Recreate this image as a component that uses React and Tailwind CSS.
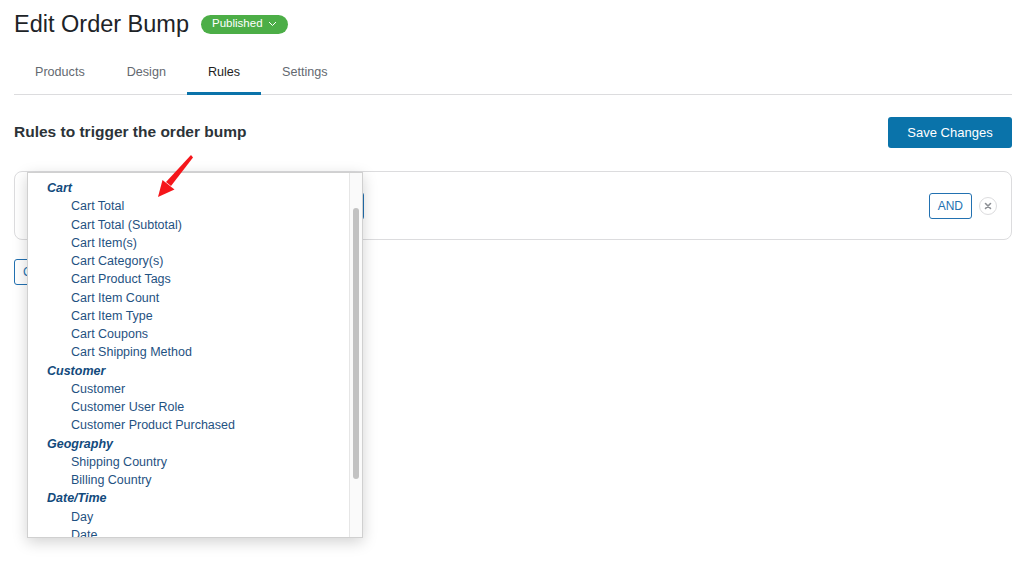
import React from "react";

const groups = [
  {
    label: "Cart",
    items: [
      "Cart Total",
      "Cart Total (Subtotal)",
      "Cart Item(s)",
      "Cart Category(s)",
      "Cart Product Tags",
      "Cart Item Count",
      "Cart Item Type",
      "Cart Coupons",
      "Cart Shipping Method",
    ],
  },
  {
    label: "Customer",
    items: ["Customer", "Customer User Role", "Customer Product Purchased"],
  },
  { label: "Geography", items: ["Shipping Country", "Billing Country"] },
  { label: "Date/Time", items: ["Day", "Date"] },
];

const tabs = ["Products", "Design", "Rules", "Settings"];

const RuleDropdown = () => {
  return (
    <div className="absolute left-[27px] top-[172px] w-[336px] h-[366px] bg-white border border-[#d0d0d0] shadow-[0_4px_14px_rgba(0,0,0,0.18)] overflow-hidden flex">
      <ul className="flex-1 pt-[6px] text-[12.5px] leading-[18.25px]">
        {groups.map((g) => (
          <React.Fragment key={g.label}>
            <li className="pl-[19px] font-bold italic text-[#124a7c]">
              {g.label}
            </li>
            {g.items.map((item) => (
              <li key={item} className="pl-[43px] text-[#1f5282]">
                {item}
              </li>
            ))}
          </React.Fragment>
        ))}
      </ul>
      {/* scrollbar */}
      <div className="w-[13px] border-l border-[#e6e6e6] bg-[#fafafa] relative">
        <div className="absolute left-[3px] top-[35px] w-[6px] h-[271px] rounded-full bg-[#c2c2c2]"></div>
      </div>
    </div>
  );
};

const RedArrow = () => (
  <svg
    className="absolute left-[150px] top-[150px]"
    width="48"
    height="52"
    viewBox="0 0 48 52"
  >
    <polygon points="41,5 43,7.5 21,36 16,32" fill="#f5161b" />
    <polygon points="8,47 12.5,30 24.5,39.5" fill="#f5161b" />
  </svg>
);

export default function App() {
  return (
    <div
      className="relative min-h-[566px] bg-white pl-[14px] pr-[12px] text-[#1e1e1e]"
      style={{ fontFamily: '"Liberation Sans", Arial, sans-serif' }}
    >
      {/* header */}
      <div className="flex items-center gap-[12px] pt-[10px]">
        <h1 className="text-[23.5px] leading-[28px] text-[#1d2327]">
          Edit Order Bump
        </h1>
        <button className="flex items-center gap-[5px] h-[19px] px-[11px] rounded-full bg-[#4cae47] text-white text-[11.5px]">
          Published
          <svg width="9" height="6" viewBox="0 0 9 6" fill="none">
            <path d="M1 1l3.5 3.5L8 1" stroke="white" strokeWidth="1" />
          </svg>
        </button>
      </div>

      {/* tabs */}
      <nav className="flex mt-[12px] border-b border-[#dcdcde]">
        {tabs.map((t) => (
          <div
            key={t}
            className={
              t === "Rules"
                ? "h-[45px] px-[21px] flex items-center text-[12.6px] text-[#1e1e1e] border-b-[3px] border-[#0a73aa] -mb-px pt-[2px]"
                : "h-[45px] px-[21px] flex items-center text-[12.6px] text-[#646970] border-b-[3px] border-transparent -mb-px pt-[2px]"
            }
          >
            {t}
          </div>
        ))}
      </nav>

      {/* rules header */}
      <div className="flex items-center justify-between mt-[22px]">
        <h2 className="text-[15.5px] font-bold text-[#2c3338] -mt-[2px]">
          Rules to trigger the order bump
        </h2>
        <button className="h-[31px] w-[124px] rounded-[3px] bg-[#0a73aa] text-white text-[13px]">
          Save Changes
        </button>
      </div>

      {/* rule card */}
      <div className="mt-[23px] h-[69px] rounded-[8px] border border-[#dcdcde] pl-[12px] pr-[14px] flex items-center justify-between">
        <div className="w-[337px] h-[28px] rounded-[3px] border border-[#2271b1]"></div>
        <div className="flex items-center gap-[7px]">
          <button className="h-[26px] px-[8px] rounded-[3px] border border-[#2271b1] text-[#2271b1] text-[12px]">
            AND
          </button>
          <button className="w-[18px] h-[18px] rounded-full border border-[#dcdcde] flex items-center justify-center">
            <svg width="8" height="8" viewBox="0 0 8 8">
              <path
                d="M1.5 1.5l5 5M6.5 1.5l-5 5"
                stroke="#8c8f94"
                strokeWidth="1.6"
                strokeLinecap="round"
              />
            </svg>
          </button>
        </div>
      </div>

      <button className="mt-[19px] h-[26px] px-[8px] rounded-[3px] border border-[#2271b1] text-[#2271b1] text-[12px]">
        Create Rule Group
      </button>

      <RuleDropdown />
      <RedArrow />
    </div>
  );
}
